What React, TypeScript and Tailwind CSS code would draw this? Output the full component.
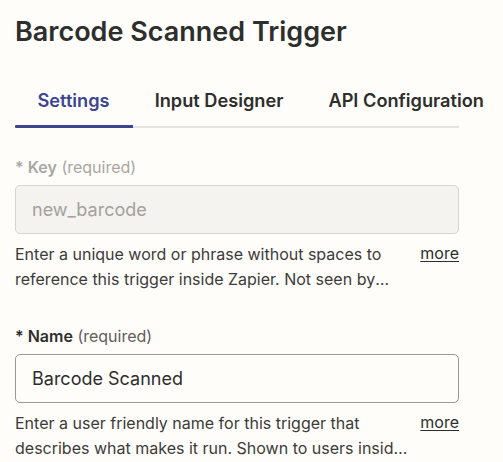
const FONT = "font-['Inter','Noto_Sans',sans-serif]"

function HelpText({ text }: { text: string }) {
  return (
    <div className="flex items-start justify-between mt-[8px] w-[444px]">
      <p className="w-[397px] text-[16px] leading-[25px] text-[#3b3b3a] line-clamp-2">{text}</p>
      <a className="text-[16px] leading-[20px] text-[#2d2e2e] underline underline-offset-2 mt-[1px]">more</a>
    </div>
  )
}

function Field({
  label,
  value,
  disabled,
  help,
}: {
  label: string
  value: string
  disabled?: boolean
  help: string
}) {
  return (
    <div className="flex flex-col">
      <div
        className={`text-[16px] leading-[20px] ${disabled ? 'text-[#a9a7a3]' : 'text-[#2d2e2e]'}`}
      >
        <span className="font-semibold">* {label}</span>{' '}
        <span className={disabled ? 'text-[#a9a7a3]' : 'text-[#5f5e5b]'}>(required)</span>
      </div>
      <div
        className={`mt-[8px] w-[444px] h-[49px] rounded-[5px] border flex items-center px-[16px] text-[18px] ${
          disabled
            ? 'bg-[#f5f3ef] border-[#d7d4cf] text-[#a3a19e]'
            : 'bg-[#fffdf9] border-[#9c9893] text-[#2d2e2e]'
        }`}
      >
        {value}
      </div>
      <HelpText text={help} />
    </div>
  )
}

const TABS = ['Settings', 'Input Designer', 'API Configuration']

export default function App() {
  return (
    <div className={`${FONT} min-h-screen w-full bg-[#fffdf9] pl-[15px] pt-[14px] overflow-hidden`}>
      <h1 className="text-[27px] leading-[36px] font-semibold text-[#2d2e2e]">Barcode Scanned Trigger</h1>

      {/* tabs */}
      <div className="mt-[38px] w-[444px]">
        <div className="flex text-[18.2px] font-semibold leading-[24px] whitespace-nowrap">
          {TABS.map((t, i) => (
            <div key={t} className={`px-[22.5px] ${i === 0 ? 'text-[#3d4592]' : 'text-[#2d2e2e]'}`}>
              {t}
            </div>
          ))}
        </div>
        <div className="mt-[13px] h-[3px] flex items-center">
          <div className="w-[118px] h-[3px] bg-[#3d4592] rounded-l-[1px]" />
          <div className="flex-1 h-[2px] bg-[#e6e4e0]" />
        </div>
      </div>

      <div className="mt-[29px] flex flex-col gap-[34px]">
        <Field
          label="Key"
          value="new_barcode"
          disabled
          help="Enter a unique word or phrase without spaces to reference this trigger inside Zapier. Not seen by users."
        />
        <Field
          label="Name"
          value="Barcode Scanned"
          help="Enter a user friendly name for this trigger that describes what makes it run. Shown to users inside Zapier."
        />
      </div>
    </div>
  )
}
